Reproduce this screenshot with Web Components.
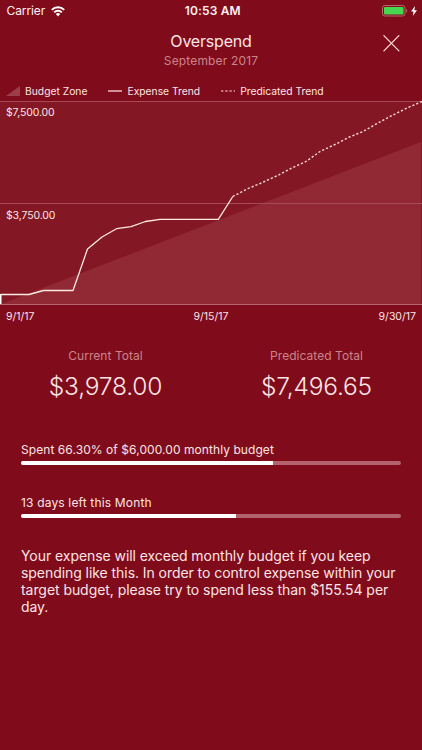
<!DOCTYPE html>
<html lang="en">
<head>
<meta charset="utf-8">
<title>Overspend</title>
<style>
  html, body {
    margin: 0;
    height: 100%;
    background: #800b1b;
  }
  body {
    font-family: Inter, "Liberation Sans", sans-serif;
    color: #fbe4e5;
    overflow: hidden;
  }
</style>
</head>
<body>
<budget-screen></budget-screen>

<script>
class StatusBar extends HTMLElement {
  constructor() {
    super();
    this.attachShadow({ mode: 'open' });
  }

  connectedCallback() {
    this.shadowRoot.innerHTML = `
      <style>
        :host {
          display: grid;
          grid-template-columns: 1fr auto 1fr;
          align-items: center;
          height: 22px;
          padding: 0 5px 0 6.5px;
          font-size: 12px;
          line-height: 22px;
          color: #fff1f1;
        }
        .side { display: flex; align-items: center; gap: 6px; letter-spacing: -0.1px; }
        .power { justify-content: flex-end; gap: 3px; }
        .time { font-weight: 600; letter-spacing: 0.15px; padding-left: 2px; }
        svg { display: block; }
      </style>
      <div class="side">
        <span>${this.getAttribute('carrier')}</span>
        <svg width="14" height="11" viewBox="0 0 14 11" fill="none" stroke="#fff" stroke-width="2">
          <path d="M0.8 3.9a8.8 8.8 0 0 1 12.4 0"/>
          <path d="M3.2 6.4a5.4 5.4 0 0 1 7.6 0"/>
          <path d="M7 10.4 4.8 8.1a3.1 3.1 0 0 1 4.4 0z" fill="#fff" stroke="none"/>
        </svg>
      </div>
      <span class="time">${this.getAttribute('time')}</span>
      <div class="side power">
        <svg width="26" height="12" viewBox="0 0 26 12">
          <rect x="0.5" y="0.5" width="22.5" height="10.5" rx="2.4" fill="none" stroke="#b4686b"/>
          <rect x="2" y="2" width="19.5" height="7.5" rx="1" fill="#45d750"/>
          <path d="M24.2 4v3.6c1.5-.5 1.5-3.1 0-3.6z" fill="#b4686b"/>
        </svg>
        <svg width="6" height="10" viewBox="0 0 6 10"><path d="M4 0 0 5.6h2.5L1.8 10 6 4.2H3.4z" fill="#fff"/></svg>
      </div>
    `;
  }
}
customElements.define('status-bar', StatusBar);

class ScreenHeader extends HTMLElement {
  constructor() {
    super();
    this.attachShadow({ mode: 'open' });
  }

  connectedCallback() {
    this.shadowRoot.innerHTML = `
      <style>
        :host {
          display: grid;
          grid-template-columns: 62px 1fr 62px;
          height: 60px;
        }
        .titles { text-align: center; padding-top: 8px; }
        .title { font-size: 16px; line-height: 22px; letter-spacing: -0.2px; }
        .subtitle { font-size: 12px; line-height: 18px; letter-spacing: 0.15px; color: #cb858c; }
        svg { display: block; margin: 13px 0 0 23px; }
      </style>
      <span></span>
      <div class="titles">
        <div class="title"><slot name="title"></slot></div>
        <div class="subtitle"><slot name="subtitle"></slot></div>
      </div>
      <svg width="17" height="17" viewBox="0 0 17 17" stroke="#ffe2d8" stroke-width="1.2" stroke-linecap="round">
        <path d="M0.9 0.7 15.9 15.9M15.9 0.7 0.9 15.9"/>
      </svg>
    `;
  }
}
customElements.define('screen-header', ScreenHeader);

class LegendItem extends HTMLElement {
  constructor() {
    super();
    this.attachShadow({ mode: 'open' });
  }

  connectedCallback() {
    this.shadowRoot.innerHTML = `
      <style>
        :host {
          display: flex;
          align-items: center;
          gap: 5px;
          font-size: 10.3px;
          line-height: 12px;
          white-space: nowrap;
        }
        svg { display: block; }
      </style>
      <svg width="14" height="10" viewBox="0 0 14 10" fill="none">${this.getMark()}</svg>
      <span><slot></slot></span>
    `;
  }

  getMark() {
    const kind = this.getAttribute('kind');
    if (kind === 'zone') return '<path d="M0 10 14 0v10z" fill="#9d3f4b"/>';
    if (kind === 'dotted') return '<path d="M0 5h14" stroke="#fbdcdc" stroke-width="1.2" stroke-dasharray="2.4 1.8"/>';
    return '<path d="M0 5h14" stroke="#fbdcdc" stroke-width="1.3"/>';
  }
}
customElements.define('legend-item', LegendItem);

class TrendChart extends HTMLElement {
  constructor() {
    super();
    this.attachShadow({ mode: 'open' });
  }

  connectedCallback() {
    this.shadowRoot.innerHTML = `
      <style>
        :host { display: block; font-size: 10.5px; }
        .legend {
          display: flex;
          align-items: center;
          gap: 21px;
          height: 18px;
          padding: 0 0 1px 6px;
        }
        .plot {
          display: grid;
          grid-template: 102px 102px / 100%;
          background: #831723;
        }
        .plot > svg { grid-area: 1 / 1 / 3 / 2; display: block; }
        .tick { grid-column: 1; padding: 5px 0 0 6px; line-height: 14px; letter-spacing: -0.12px; z-index: 1; }
        .top { grid-row: 1; }
        .mid { grid-row: 2; padding-top: 6px; }
        .dates {
          display: grid;
          grid-template-columns: 1fr auto 1fr;
          padding: 1px 6px 0;
          height: 21px;
          line-height: 22px;
        }
        .dates span:last-child { text-align: right; }
      </style>
      <div class="legend">
        <legend-item kind="zone">Budget Zone</legend-item>
        <legend-item kind="solid">Expense Trend</legend-item>
        <legend-item kind="dotted">Predicated Trend</legend-item>
      </div>
      <div class="plot">
        <svg width="422" height="204" viewBox="0 0 422 204" fill="none">
          <path d="M0 203.5 421 41v162.5z" fill="#912935"/>
          <path d="M0 .5h422M0 102.5h422" stroke="#a84a56"/>
          <path d="M0 203.5h422" stroke="#b66771"/>
          <path d="M.75 203v-10" stroke="#fff" stroke-width="1.5"/>
          <polyline points="${this.getAttribute('expense')}" stroke="#ffe9e2" stroke-width="1.3" stroke-linejoin="round"/>
          <polyline points="${this.getAttribute('predicted')}" stroke="#fbd9d6" stroke-width="1.4" stroke-dasharray="2.2 2"/>
        </svg>
        <span class="tick top">$7,500.00</span>
        <span class="tick mid">$3,750.00</span>
      </div>
      <div class="dates"><span>9/1/17</span><span>9/15/17</span><span>9/30/17</span></div>
    `;
  }
}
customElements.define('trend-chart', TrendChart);

class TotalFigure extends HTMLElement {
  constructor() {
    super();
    this.attachShadow({ mode: 'open' });
  }

  connectedCallback() {
    this.shadowRoot.innerHTML = `
      <style>
        :host { display: block; text-align: center; }
        .label { font-size: 12px; line-height: 18px; letter-spacing: 0.05px; color: #cb858c; }
        .value { font-size: 24.5px; line-height: 34px; margin-top: 4px; font-weight: 300; letter-spacing: -0.2px; }
      </style>
      <div class="label">${this.getAttribute('label')}</div>
      <div class="value"><slot></slot></div>
    `;
  }
}
customElements.define('total-figure', TotalFigure);

class ProgressLine extends HTMLElement {
  constructor() {
    super();
    this.attachShadow({ mode: 'open' });
  }

  connectedCallback() {
    this.shadowRoot.innerHTML = `
      <style>
        :host { display: block; font-size: 12px; line-height: 18px; letter-spacing: 0.07px; }
        :host([loose]) { letter-spacing: 0.16px; }
        .track {
          height: 4px;
          margin-top: 2px;
          border-radius: 2px;
          background: #b4626d;
          overflow: hidden;
        }
        .fill { height: 100%; width: ${this.getAttribute('percent')}%; background: #fff; }
      </style>
      <slot></slot>
      <div class="track"><div class="fill"></div></div>
    `;
  }
}
customElements.define('progress-line', ProgressLine);

class BudgetScreen extends HTMLElement {
  constructor() {
    super();
    this.attachShadow({ mode: 'open' });
  }

  connectedCallback() {
    this.shadowRoot.innerHTML = `
      <style>
        :host { display: block; width: 422px; height: 750px; }
        .totals {
          display: grid;
          grid-template-columns: 1fr 1fr;
          padding-top: 20px;
        }
        .progress {
          display: flex;
          flex-direction: column;
          gap: 29px;
          padding: 38px 21px 0;
        }
        p {
          margin: 29px 0 0 21px;
          font-size: 14px;
          line-height: 17px;
          letter-spacing: -0.06px;
          white-space: nowrap;
        }
      </style>
      <status-bar carrier="Carrier" time="10:53 AM"></status-bar>
      <screen-header>
        <span slot="title">Overspend</span>
        <span slot="subtitle">September 2017</span>
      </screen-header>
      <trend-chart
        expense="1,193.5 29,193.5 43.6,189.5 73,189.5 87.5,148 102,136 116.5,127.7 131,125.7 145.5,120.5 160,118.4 218.3,118.4 232.8,95.5"
        predicted="232.8,95.5 247,88 262,81.7 276.5,75 291,67.5 306,60.5 320,50.5 335,43.5 349.5,36 363,30.5 378,22 392,14.5 407,7 422,0.5"></trend-chart>
      <div class="totals">
        <total-figure label="Current Total">$3,978.00</total-figure>
        <total-figure label="Predicated Total">$7,496.65</total-figure>
      </div>
      <div class="progress">
        <progress-line percent="66.3">Spent 66.30% of $6,000.00 monthly budget</progress-line>
        <progress-line percent="56.7" loose>13 days left this Month</progress-line>
      </div>
      <p>Your expense will exceed monthly budget if you keep<br>spending like this. In order to control expense within your<br>target budget, please try to spend less than $155.54 per<br>day.</p>
    `;
  }
}
customElements.define('budget-screen', BudgetScreen);
</script>
</body>
</html>
